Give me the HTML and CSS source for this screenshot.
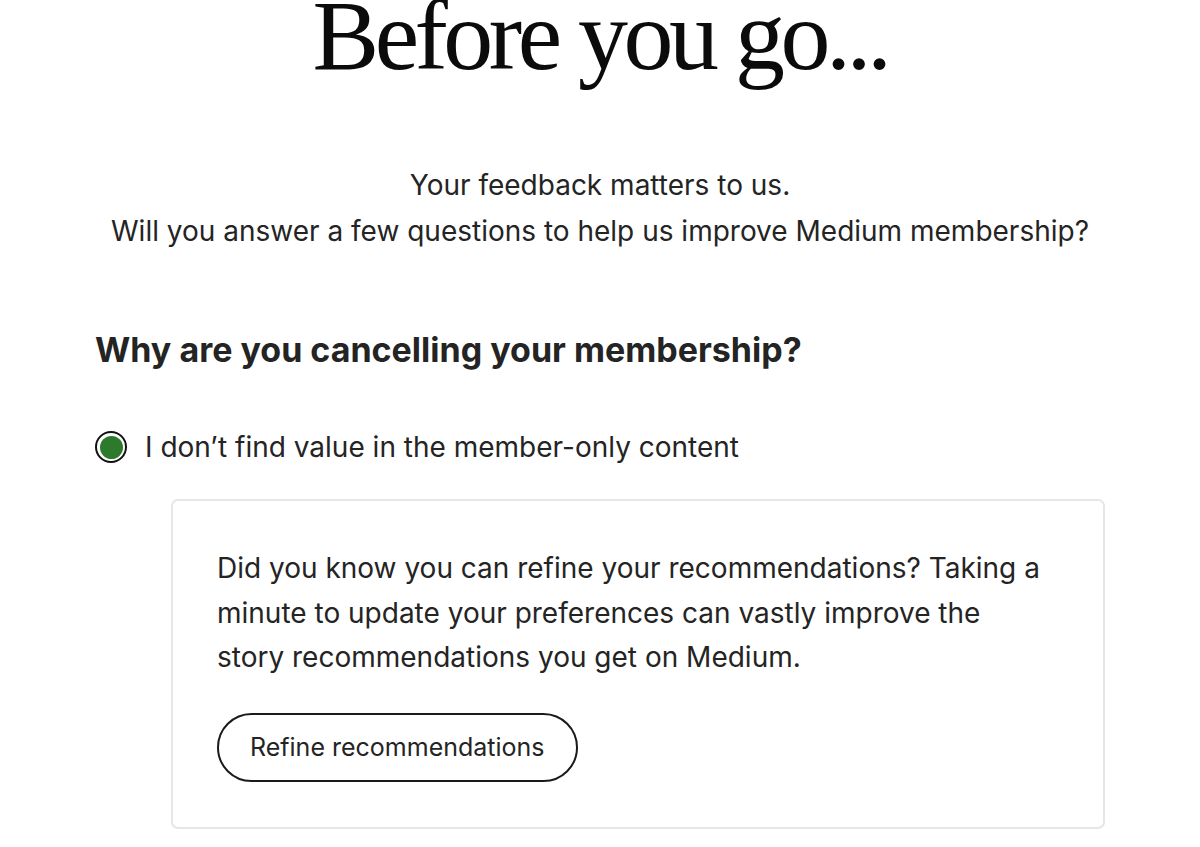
FILE: index.html
```html
<!DOCTYPE html>
<html lang="en">
<head>
<meta charset="utf-8">
<link rel="stylesheet" href="styles.css">
</head>
<body>
<main class="page">
  <h1 class="title">Before you go...</h1>
  <p class="intro">Your feedback matters to us.<br>Will you answer a few questions to help us improve Medium membership?</p>
  <section class="question">
    <h2 class="q-title">Why are you cancelling your membership?</h2>
    <label class="option">
      <span class="radio"><span class="dot"></span></span>
      <span class="option-text">I don’t find value in the member-only content</span>
    </label>
    <div class="card">
      <p class="card-text">Did you know you can refine your recommendations? Taking a minute to update your preferences can vastly improve the story recommendations you get on Medium.</p>
      <button class="btn">Refine recommendations</button>
    </div>
  </section>
</main>
</body>
</html>
```
FILE: styles.css
```css
* { box-sizing: border-box; }
html, body { margin: 0; padding: 0; background: #fff; }
body { font-family: Inter, "Liberation Sans", Arial, sans-serif; color: #242424; overflow: hidden; height: 847px; }
.page { width: 1200px; padding: 0 95px; }
.title {
  font-family: "Liberation Serif", "Times New Roman", serif;
  font-weight: 400;
  font-size: 100px;
  line-height: 72px;
  letter-spacing: -4.5px;
  text-align: center;
  color: #0b0b0b;
  margin: 0;
}
.intro {
  text-align: center;
  font-size: 28px;
  line-height: 46px;
  margin: 90px 0 0;
  color: #242424;
}
.question { margin-top: 76px; }
.q-title {
  font-size: 34px;
  font-weight: 700;
  margin: 0;
  line-height: 40px;
  color: #242424;
}
.option {
  display: flex;
  align-items: center;
  gap: 18px;
  height: 40px;
  margin-top: 57px;
}
.radio {
  width: 32px; height: 32px;
  border: 2px solid #111;
  border-radius: 50%;
  display: flex; align-items: center; justify-content: center;
}
.dot { width: 23px; height: 23px; border-radius: 50%; background: #2d7a2d; }
.option-text { font-size: 28px; line-height: 40px; color: #242424; }
.card {
  margin: 32px 0 0 76px;
  width: 934px;
  border: 2px solid #e6e6e6;
  border-radius: 7px;
  padding: 45px 56px 45px 44px;
}
.card-text {
  margin: 0;
  font-size: 28px;
  line-height: 44.5px;
  color: #242424;
}
.btn {
  display: block;
  margin-top: 33px;
  font-family: inherit;
  font-size: 25px;
  color: #242424;
  background: #fff;
  border: 2px solid #1a1a1a;
  border-radius: 40px;
  height: 69px;
  padding: 0 31px;
}
```
